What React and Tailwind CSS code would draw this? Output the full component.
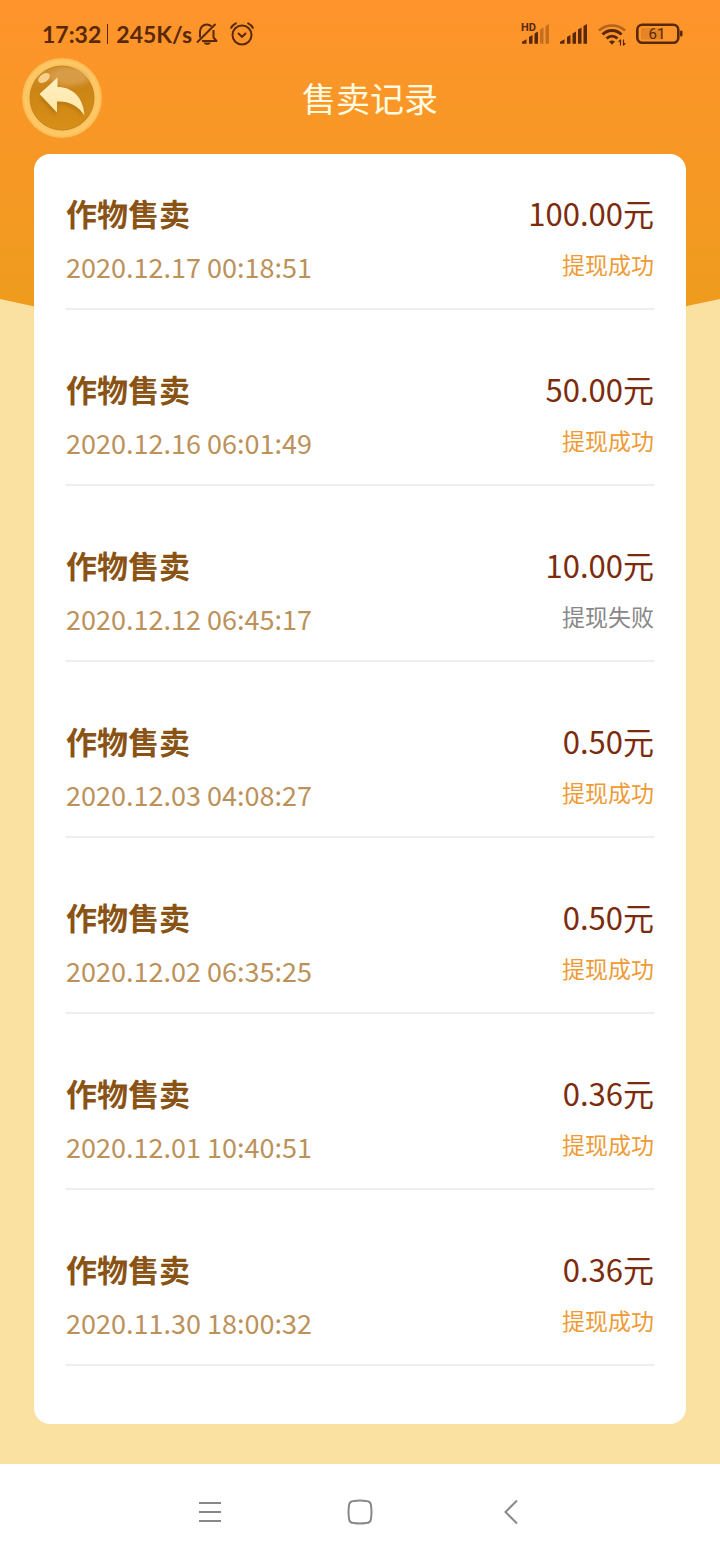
const records = [
  { id: 1, title: '作物售卖', time: '2020.12.17 00:18:51', amount: '100.00', ok: true },
  { id: 2, title: '作物售卖', time: '2020.12.16 06:01:49', amount: '50.00', ok: true },
  { id: 3, title: '作物售卖', time: '2020.12.12 06:45:17', amount: '10.00', ok: false },
  { id: 4, title: '作物售卖', time: '2020.12.03 04:08:27', amount: '0.50', ok: true },
  { id: 5, title: '作物售卖', time: '2020.12.02 06:35:25', amount: '0.50', ok: true },
  { id: 6, title: '作物售卖', time: '2020.12.01 10:40:51', amount: '0.36', ok: true },
  { id: 7, title: '作物售卖', time: '2020.11.30 18:00:32', amount: '0.36', ok: true },
]

function MutedBell() {
  return (
    <svg width="22" height="24" viewBox="0 0 22 24" fill="none" stroke="currentColor" strokeWidth="2">
      <path d="M4 15.500V9.500C4 5.500 7 2.500 10.800 2.500c1.800 0 3.400.7 4.600 1.800M17.500 8v7.500l3 3.500H6" strokeLinejoin="round" />
      <path d="M1 20.500 19.500 2" />
      <path d="M7.500 20.500h7.500c-.8 1.700-2 2.300-3.700 2.300s-3-.6-3.800-2.300Z" fill="currentColor" stroke="none" />
    </svg>
  )
}

function AlarmClock() {
  return (
    <svg width="24" height="24" viewBox="0 0 24 24" fill="none" stroke="currentColor" strokeWidth="2" strokeLinecap="round">
      <circle cx="12" cy="13" r="9.500" />
      <path d="M8.500 11.500 12 14.800l3.500-3.300" />
      <path d="M1.200 5.800C2.200 3.800 3.600 2.400 5.800 1.300M22.800 5.800c-1-2-2.400-3.400-4.600-4.500" />
    </svg>
  )
}

function Signal({ hd }) {
  return (
    <svg width="28" height="24" viewBox="0 0 28 24" fill="currentColor" overflow="visible">
      {hd && <text x="-1" y="8.500" fontSize="11" fontWeight="700" fontFamily="Roboto, sans-serif">HD</text>}
      <path d="M0 21.700v-2l4.500-2.500v4.500Z" />
      <path d="M7 21.700V15l3.500-2v8.700Z" />
      <path d="M12.500 21.700V11.500L16 9.500v12.200Z" />
      <path d="M18 21.700V7.500l3.500-2v16.200Z" opacity={hd ? 0.35 : 1} />
      <path d="M23.500 21.700V4L27 2v19.700Z" opacity={hd ? 0.35 : 1} />
    </svg>
  )
}

function Wifi() {
  return (
    <svg width="28" height="24" viewBox="0 0 28 24" fill="none" stroke="currentColor" strokeWidth="3">
      <path d="M1 8.500C8.500 1.800 19.500 1.800 27 8.500" strokeWidth="2.500" opacity="0.45" />
      <path d="M4.500 12.500C10 7.200 18 7.200 23.500 12.500" />
      <path d="M8.500 16.500c3.300-3 7.700-3 11 0" />
      <path d="M11 19.500c1.500-1.500 4.500-1.500 6 0L14 22.800Z" fill="currentColor" stroke="none" />
      <path d="M22.500 17.500v6m-1.800-3.500 1.800-2.500M25.500 23.500v-6m1.800 3.500-1.800 2.500" strokeWidth="1.200" />
    </svg>
  )
}

function Battery({ level }) {
  return (
    <svg width="48" height="24" viewBox="0 0 48 24" fill="none" stroke="currentColor">
      <rect x="1.300" y="2.800" width="41" height="18" rx="5" strokeWidth="2.600" />
      <rect x="5" y="6" width="22" height="11.500" fill="currentColor" stroke="none" opacity="0.15" />
      <rect x="44" y="8.500" width="2.500" height="6" rx="1" fill="currentColor" stroke="none" />
      <text x="21" y="17" textAnchor="middle" fontSize="15" fontWeight="400" fill="currentColor" stroke="none" fontFamily="Roboto, sans-serif">
        {level}
      </text>
    </svg>
  )
}

function BackIcon() {
  return (
    <svg viewBox="0 0 80 80" className="w-20 h-20">
      <defs>
        <radialGradient id="ring" cx="0.5" cy="0.5" r="0.5">
          <stop offset="0.8" stopColor="#fac25c" />
          <stop offset="0.92" stopColor="#fdc968" />
          <stop offset="1" stopColor="#fbb850" />
        </radialGradient>
        <linearGradient id="disc" x1="0" y1="0" x2="0" y2="1">
          <stop offset="0" stopColor="#cf8f35" />
          <stop offset="0.35" stopColor="#cb8515" />
          <stop offset="1" stopColor="#d98f18" />
        </linearGradient>
        <linearGradient id="arrow" x1="0" y1="0" x2="0" y2="1">
          <stop offset="0" stopColor="#fff0c4" />
          <stop offset="1" stopColor="#ffe6a4" />
        </linearGradient>
        <filter id="soft" x="-30%" y="-30%" width="160%" height="160%">
          <feGaussianBlur stdDeviation="2" />
        </filter>
      </defs>
      <circle cx="40" cy="40" r="40" fill="url(#ring)" />
      <circle cx="40" cy="40" r="32" fill="url(#disc)" stroke="#c4821c" strokeWidth="1" />
      <ellipse cx="47" cy="19" rx="20" ry="9" fill="#e2ab62" opacity="0.55" filter="url(#soft)" />
      <ellipse cx="22" cy="20" rx="6.500" ry="4" transform="rotate(-35 22 20)" fill="#f8d08c" />
      <path d="M18 39 34 23v9c15 0 26 9 28 27-7-9-16-14-28-13v12Z" fill="#9c6208" opacity="0.55" filter="url(#soft)" />
      <path d="M17.500 36 35.500 19.500V29C50 29 61.500 39 62.500 57.500 56 47.500 47 43 35 43.500V54.500Z" fill="url(#arrow)" />
    </svg>
  )
}

function StatusBar() {
  return (
    <div className="flex items-center justify-between h-12 pl-[42px] pr-9 pt-5 text-[#59280a]">
      <div className="flex items-center font-['Lato',sans-serif] text-[23px] leading-7 font-bold">
        <span>17:32</span>
        <span className="w-px h-5 ml-1.5 mr-2 bg-[#59280a]" />
        <span className="mr-1">245K/s</span>
        <MutedBell />
        <span className="w-3" />
        <AlarmClock />
      </div>
      <div className="flex items-center gap-2.5">
        <Signal hd />
        <Signal />
        <Wifi />
        <Battery level={61} />
      </div>
    </div>
  )
}

function RecordItem({ record }) {
  return (
    <li className="flex justify-between pb-[17px] border-b-2 border-[#eeeeee]">
      <div className="flex flex-col gap-1.5">
        <h2 className="text-[31px] leading-12 font-bold text-[#8a5316]">{record.title}</h2>
        <time className="text-[27px] leading-12 text-[#bc915a]">{record.time}</time>
      </div>
      <div className="flex flex-col gap-[3px] text-right">
        <span className="text-[31px] leading-12 text-[#7c2c0c]">{record.amount}元</span>
        <span className={`text-[23px] leading-12 ${record.ok ? 'text-[#ee9b35]' : 'text-[#888888]'}`}>
          {record.ok ? '提现成功' : '提现失败'}
        </span>
      </div>
    </li>
  )
}

export default function App() {
  return (
    <div className="relative isolate flex flex-col min-h-screen bg-[#fae1a2] font-['Noto_Sans_CJK_SC',sans-serif]">
      <svg className="absolute inset-x-0 top-0 -z-10 w-full h-85" viewBox="0 0 720 340" preserveAspectRatio="none">
        <defs>
          <linearGradient id="sky" x1="0" y1="0" x2="0" y2="1">
            <stop offset="0" stopColor="#ff942c" />
            <stop offset="1" stopColor="#ec9c1c" />
          </linearGradient>
        </defs>
        <path d="M0 0H720V299Q540 340 360 340T0 299Z" fill="url(#sky)" />
      </svg>

      <StatusBar />

      <header className="grid grid-cols-[100px_1fr_80px] items-center px-[22px] pt-2.5 pb-4">
        <button type="button" aria-label="返回" className="justify-self-start rounded-full">
          <BackIcon />
        </button>
        <h1 className="text-center text-[34px] leading-12 text-[#fffbe0]">售卖记录</h1>
      </header>

      <main className="flex-1 mx-[34px] mb-10 px-8 pt-[35px] pb-14 rounded-2xl bg-white">
        <ul className="flex flex-col gap-[55px]">
          {records.map(r => <RecordItem key={r.id} record={r} />)}
        </ul>
      </main>

      <nav className="flex justify-center h-24 bg-white text-[#888888]">
        <button type="button" aria-label="最近任务" className="flex items-center justify-center w-[150px]">
          <svg width="24" height="24" viewBox="0 0 24 24" stroke="currentColor" strokeWidth="2" fill="none">
            <path d="M1 3h22M1 12h22M1 21h22" />
          </svg>
        </button>
        <button type="button" aria-label="主屏幕" className="flex items-center justify-center w-[150px]">
          <svg width="26" height="26" viewBox="0 0 26 26" stroke="currentColor" strokeWidth="2" fill="none">
            <path d="M7 2Q13 1 19 2Q24 2 24 7Q25 13 24 19Q24 24 19 24Q13 25 7 24Q2 24 2 19Q1 13 2 7Q2 2 7 2Z" />
          </svg>
        </button>
        <button type="button" aria-label="返回上一页" className="flex items-center justify-center w-[150px]">
          <svg width="26" height="26" viewBox="0 0 26 26" stroke="currentColor" strokeWidth="2" fill="none">
            <path d="M20 1.500 8.500 13 20 24.500" />
          </svg>
        </button>
      </nav>
    </div>
  )
}
